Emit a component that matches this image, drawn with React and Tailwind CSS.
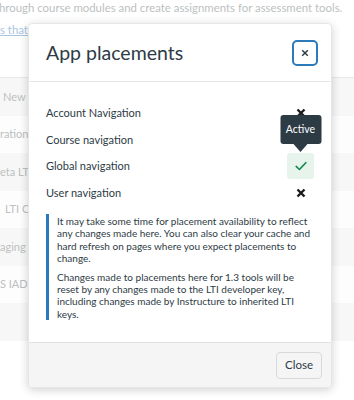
import React from 'react';

const rows = [
  { label: 'New C', bg: 'bg-[#f7f7f7]', pad: 'pl-[3px]' },
  { label: 'ration', bg: 'bg-[#fdfdfd]', pad: '' },
  { label: 'eta LTI', bg: 'bg-[#f7f7f7]', pad: '' },
  { label: 'LTI Cli', bg: 'bg-[#fdfdfd]', pad: 'pl-[5px]' },
  { label: 'aging I', bg: 'bg-[#f7f7f7]', pad: '' },
  { label: 'S IAD I', bg: 'bg-[#fdfdfd]', pad: '' },
  { label: '', bg: 'bg-[#f7f7f7]', pad: '' },
];

const placements = [
  { name: 'Account Navigation', on: false },
  { name: 'Course navigation', on: null },
  { name: 'Global navigation', on: true, tip: true },
  { name: 'User navigation', on: false },
];

const Cross = ({ size = 10, stroke = 2.4, color = '#1b1b1b' }) => (
  <svg width={size} height={size} viewBox="0 0 10 10" fill="none">
    <path d="M1.5 1.5 L8.5 8.5 M8.5 1.5 L1.5 8.5" stroke={color} strokeWidth={stroke} strokeLinecap="butt" />
  </svg>
);

const Check = () => (
  <svg width="14" height="14" viewBox="0 0 16 16" fill="none">
    <path d="M2.5 8.5 L6.2 12 L13.5 4.2" stroke="#0b874b" strokeWidth="1.8" strokeLinecap="round" strokeLinejoin="round" />
  </svg>
);

export default function App() {
  return (
    <div className="relative w-[354px] h-[400px] overflow-hidden bg-white font-['Lato',sans-serif]">
      {/* page behind the modal */}
      <p className="text-[11.4px] leading-4 whitespace-nowrap text-[#bcbfc1] -ml-[1px]">
        hrough course modules and create assignments for assessment tools.
      </p>
      <p className="mt-[6px] text-[11.4px] leading-4 whitespace-nowrap text-[#a9c6e2] underline">s that</p>
      <div className="mt-[39px] border-t border-[#e8e8e8]">
        {rows.map((r, i) => (
          <div key={i} className={`h-[37.5px] flex items-center text-[11px] text-[#bcbfc1] whitespace-nowrap ${r.bg} ${r.pad}`}>
            {r.label}
          </div>
        ))}
      </div>

      {/* modal */}
      <div className="absolute inset-0">
        <div className="ml-[28px] mt-[23px] w-[304px] h-[365px] flex flex-col bg-white rounded-[4px] border border-[#e4e6e8] shadow-[0_2px_10px_rgba(0,0,0,0.18)]">
          <div className="h-[58px] shrink-0 flex items-center justify-between pl-[17px] pr-[13px] border-b border-[#e4e6e8]">
            <h2 className="text-[19.5px] text-[#2d3b45] leading-none">App placements</h2>
            <button className="w-[26px] h-[26px] flex items-center justify-center rounded-[5px] border-2 border-[#2b7abc] bg-white">
              <Cross size={8} stroke={1.8} color="#2d3b45" />
            </button>
          </div>

          <div className="flex-1 px-[17px] pt-[18px]">
            {placements.map((p) => (
              <div key={p.name} className="h-[26.5px] flex items-center justify-between">
                <span className="text-[11px] text-[#2d3b45]">{p.name}</span>
                <div className="relative w-[27px] h-[26px] flex items-center justify-center">
                  {p.on === true && (
                    <div className="w-[27px] h-[26px] rounded-[3px] bg-[#e7f4ec] flex items-center justify-center">
                      <Check />
                    </div>
                  )}
                  {p.on === false && <Cross size={10} stroke={2.4} />}
                  {p.tip && (
                    <div className="absolute left-1/2 -translate-x-1/2 bottom-full mb-[9px] flex flex-col items-center">
                      <div className="w-[41px] h-[29px] rounded-[3px] bg-[#2d3b45] text-white text-[10.5px] flex items-center justify-center">
                        Active
                      </div>
                      <div className="absolute top-full w-0 h-0 border-x-[7px] border-x-transparent border-t-[8px] border-t-[#2d3b45]" />
                    </div>
                  )}
                </div>
              </div>
            ))}

            <div className="mt-[8px] border-l-[3px] border-[#2b7abc] pl-[8px] pt-[1px] text-[10px] leading-[12.4px] text-[#2d3b45]">
              <p>
                It may take some time for placement availability to reflect any changes made here. You can also clear your
                cache and hard refresh on pages where you expect placements to change.
              </p>
              <p className="mt-[6px]">
                Changes made to placements here for 1.3 tools will be reset by any changes made to the LTI developer key,
                including changes made by Instructure to inherited LTI keys.
              </p>
            </div>
          </div>

          <div className="h-[45px] shrink-0 flex items-center justify-end pr-[9px] bg-[#f5f5f5] border-t border-[#e0e3e5] rounded-b-[4px]">
            <button className="w-[46px] h-[27px] rounded-[4px] border border-[#d7dadd] bg-[#f5f5f5] text-[11.5px] text-[#2d3b45]">
              Close
            </button>
          </div>
        </div>
      </div>
    </div>
  );
}
